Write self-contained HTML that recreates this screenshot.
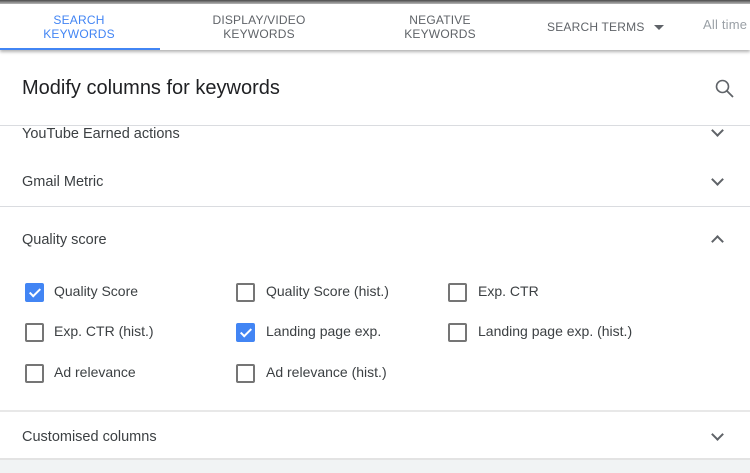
<!DOCTYPE html><html><head><style>
body{margin:0;width:750px;height:471px;overflow:hidden;background:#fff;font-family:"Liberation Sans",Arial,sans-serif;position:relative}
.a{position:absolute}
.tab{position:absolute;top:13px;font-size:12px;color:#5f6368;text-align:center;line-height:14px;letter-spacing:0.2px}
.row{position:absolute;left:22px;font-size:14.5px;color:#3c4043}
.chev{position:absolute;right:28px;width:7px;height:7px;border-right:2px solid #5f6368;border-bottom:2px solid #5f6368;transform:rotate(45deg)}
.cb{position:absolute;width:15px;height:15px;border:2px solid #757575;border-radius:2px}
.cb.on{background:#4285f4;border-color:#4285f4}
.cb.on:after{content:"";position:absolute;left:4.5px;top:0.5px;width:4px;height:9px;border-right:2px solid #fff;border-bottom:2px solid #fff;transform:rotate(45deg)}
.lbl{position:absolute;font-size:14px;color:#3c4043}
.hr{position:absolute;left:0;width:750px;height:1px;background:#dadce0}
</style></head><body>
<div class="a" style="left:0;top:0;width:750px;height:4px;background:linear-gradient(#4a4a4a,#bbb)"></div>
<div class="a" style="left:0;top:4px;width:750px;height:46px;background:#fff;box-shadow:0 2px 3px rgba(0,0,0,.3)"></div>
<div class="tab" style="left:0;width:158px;color:#4285f4">SEARCH<br>KEYWORDS</div>
<div class="a" style="left:0;top:48px;width:160px;height:2px;background:#4285f4"></div>
<div class="tab" style="left:180px;width:158px">DISPLAY/VIDEO<br>KEYWORDS</div>
<div class="tab" style="left:370px;width:140px">NEGATIVE<br>KEYWORDS</div>
<div class="tab" style="left:547px;top:20px">SEARCH TERMS</div>
<div class="a" style="left:654px;top:25px;border-left:5px solid transparent;border-right:5px solid transparent;border-top:5px solid #5f6368"></div>
<div class="tab" style="left:703px;top:18px;font-size:13px;color:#9aa0a6">All time</div>
<div class="a" style="left:22px;top:77px;font-size:20px;color:#202124">Modify columns for keywords</div>
<svg class="a" style="left:714px;top:78px" width="22" height="22" viewBox="0 0 22 22"><circle cx="8.5" cy="8.5" r="6" fill="none" stroke="#5f6368" stroke-width="1.6"/><path d="M13 13l6 6" stroke="#5f6368" stroke-width="1.8"/></svg>
<div class="hr" style="top:125px"></div>
<div class="row" style="top:126px">YouTube Earned actions</div>
<div class="chev" style="top:126px"></div>
<div class="row" style="top:174px">Gmail Metric</div>
<div class="chev" style="top:175px"></div>
<div class="hr" style="top:206px"></div>
<div class="row" style="top:232px">Quality score</div>
<div class="chev" style="top:237px;transform:rotate(225deg)"></div>
<div class="cb on" style="left:25px;top:283px"></div><div class="lbl" style="left:54px;top:283px">Quality Score</div>
<div class="cb" style="left:236px;top:283px"></div><div class="lbl" style="left:266px;top:283px">Quality Score (hist.)</div>
<div class="cb" style="left:448px;top:283px"></div><div class="lbl" style="left:478px;top:283px">Exp. CTR</div>
<div class="cb" style="left:25px;top:323px"></div><div class="lbl" style="left:54px;top:323px">Exp. CTR (hist.)</div>
<div class="cb on" style="left:236px;top:323px"></div><div class="lbl" style="left:266px;top:323px">Landing page exp.</div>
<div class="cb" style="left:448px;top:323px"></div><div class="lbl" style="left:478px;top:323px">Landing page exp. (hist.)</div>
<div class="cb" style="left:25px;top:364px"></div><div class="lbl" style="left:54px;top:364px">Ad relevance</div>
<div class="cb" style="left:236px;top:364px"></div><div class="lbl" style="left:266px;top:364px">Ad relevance (hist.)</div>
<div class="hr" style="top:410px;height:2px;background:#e8e8e8"></div>
<div class="row" style="top:429px">Customised columns</div>
<div class="chev" style="top:430px"></div>
<div class="a" style="left:0;top:458px;width:750px;height:13px;background:#f1f3f4;border-top:2px solid #e3e3e3"></div>
</body></html>
